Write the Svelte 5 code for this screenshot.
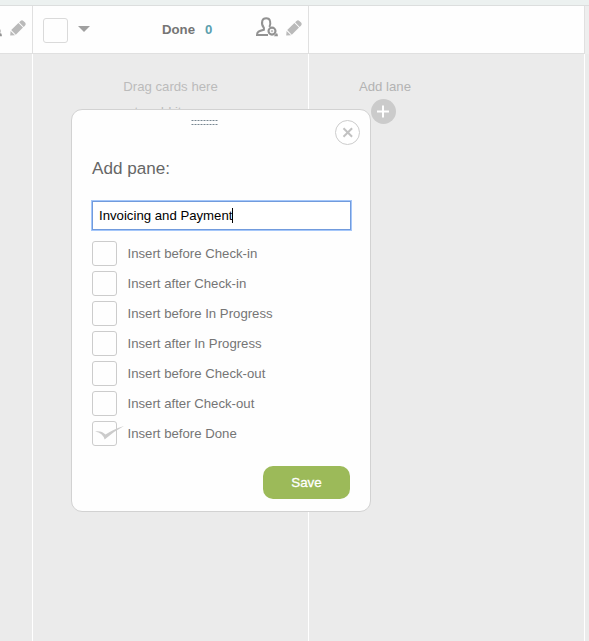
<script>
  const options = [
    'Insert before Check-in',
    'Insert after Check-in',
    'Insert before In Progress',
    'Insert after In Progress',
    'Insert before Check-out',
    'Insert after Check-out',
    'Insert before Done'
  ];
  let selected = $state(6);
  let name = $state('Invoicing and Payment');
</script>

{#snippet pencil()}
  <svg class="pencil" width="16" height="16" viewBox="0 0 16 16">
    <path d="M0.2 15.6 L.6 10.9 L5 15.3 Z M1.2 10 L8.4 2.9 L13 7.5 L5.8 14.7 Z M9.1 2.3 L10.5 .9 Q12 -.4 13.4 .9 L15.1 2.6 Q16.3 4 15.1 5.4 L13.7 6.9 Z" fill="#bababa" />
  </svg>
{/snippet}

{#snippet person()}
  <svg class="person" width="24" height="22" viewBox="0 0 24 22">
    <path d="M13 19.1H2C2 15.7 3.7 15 8.9 13.7V11.9C6.9 9.6 6.7 7 7.3 4.8C8.2 1.3 14.2 1.3 15 4.8C15.6 7 15.4 9.1 14.4 10.9" fill="none" stroke="#929292" stroke-width="2" />
    <circle cx="17" cy="15.1" r="3.5" fill="none" stroke="#929292" stroke-width="2.1" />
    <path d="M17 13.9v2.4M15.8 15.1h2.4" stroke="#aaa" stroke-width=".9" />
    <path d="M18.9 20.2Q19.8 18.4 22 17Q22.9 18.2 22.9 20.2Z" fill="#929292" />
  </svg>
{/snippet}

<div class="board">
  <div class="strip"></div>
  <header>
    <div class="head first">
      <span class="clip">{@render person()}</span>
      {@render pencil()}
    </div>
    <div class="head main">
      <span class="color"></span>
      <span class="arrow"></span>
      <span class="title">Done</span>
      <span class="count">0</span>
      <span class="icons">{@render person()}{@render pencil()}</span>
    </div>
    <div class="head last"></div>
    <div class="edge"></div>
  </header>
  <main>
    <div class="lane first"></div>
    <div class="lane hint">Drag cards here<br />to add items</div>
    <div class="lane add">
      <div class="addlane">
        <span>Add lane</span>
        <svg width="25" height="25" viewBox="0 0 25 25">
          <circle cx="12.5" cy="12.5" r="12.5" fill="#cbcbcb" />
          <path d="M12 6.5v12M6 12.5h12" stroke="#fff" stroke-width="2" />
        </svg>
      </div>
    </div>
  </main>

  <div class="dialog">
    <svg class="grip" width="27" height="5" viewBox="0 0 27 5">
      <path d="M0 .5h27M0 4.5h27" stroke="#bcc4ca" />
      <path d="M0 .5h27M0 4.5h27" stroke="#77858f" stroke-dasharray="1 2" stroke-dashoffset="-1" />
    </svg>
    <svg class="close" width="25" height="25" viewBox="0 0 25 25">
      <circle cx="12.5" cy="12.5" r="12" fill="#fff" stroke="#ccc" />
      <path d="M8.5 8.2l8.6 8.6M17.1 8.2l-8.6 8.6" stroke="#c2c2c2" stroke-width="2" />
    </svg>
    <h2>Add pane:</h2>
    <div class="field"><span>{name}</span><i></i></div>
    <div class="options">
      {#each options as option, i}
        <div class="option" role="radio" tabindex="-1" aria-checked={selected === i} onclick={() => (selected = i)} onkeydown={() => (selected = i)}>
          <span class="box">
            {#if selected === i}
              <svg width="29" height="14" viewBox="0 0 29 14">
                <path d="M0 5.4Q6.5 4.2 10.5 8.6Q18 3.4 29 0Q18.5 5.5 9.6 13.4Q8 7 0 5.4Z" fill="#cbcbcb" />
              </svg>
            {/if}
          </span>
          <span>{option}</span>
        </div>
      {/each}
    </div>
    <button>Save</button>
  </div>
</div>

<style>
  .board {
    position: relative;
    display: flex;
    flex-direction: column;
    width: 589px;
    height: 641px;
    overflow: hidden;
    background: #ebebeb;
    font: 13.2px/18px 'Liberation Sans', Arial, sans-serif;
    color: #757575;
  }
  .strip { height: 5px; background: #ecf1f0; border-bottom: 1px solid #dcdede; }
  header { display: flex; height: 48px; }
  .head {
    box-sizing: border-box;
    display: flex;
    background: #fefefe;
    border-right: 1px solid #e0e0e0;
    border-bottom: 1px solid #e0e0e0;
  }
  .first { width: 33px; }
  .main, .last { width: 276px; }
  .edge { flex: 1; background: #eee; }
  .head.first { padding-top: 10px; }
  .clip { display: flex; justify-content: flex-end; width: 3px; height: 22px; margin-right: 7px; overflow: hidden; }
  .head.first .pencil { margin-top: 4px; }
  .color {
    box-sizing: border-box;
    width: 25px;
    height: 25px;
    margin: 12px 0 0 10px;
    border: 1px solid #dadada;
    border-radius: 3px;
  }
  .arrow {
    height: 0;
    margin: 20px 0 0 10px;
    border: 6px solid transparent;
    border-top-color: #a0a0a0;
    border-bottom: 0;
  }
  .title { width: 43px; margin: 15px 0 0 72px; font-weight: bold; }
  .count { width: 8px; margin-top: 15px; font-weight: bold; color: #5b9fae; }
  .icons { display: flex; margin: 10px 0 0 42px; }
  .icons .pencil { margin: 4px 0 0 7px; }
  svg { display: block; flex-shrink: 0; }

  main { display: flex; flex: 1; }
  .lane { box-sizing: border-box; border-right: 1px solid #fff; }
  .hint { width: 276px; padding-top: 20px; line-height: 25px; color: #bbb; text-align: center; }
  .add { width: 276px; color: #b3b3b3; }
  .addlane {
    display: flex;
    flex-direction: column;
    align-items: center;
    width: 52px;
    margin: 24px 0 0 50px;
    white-space: nowrap;
  }
  .addlane svg { margin: 3px 3px 0 0; }

  .dialog {
    position: absolute;
    left: 71px;
    top: 109px;
    box-sizing: border-box;
    display: flex;
    flex-direction: column;
    width: 300px;
    height: 403px;
    padding: 49px 19px 0 20px;
    background: #fefefe;
    border: 1px solid #d2d2d2;
    border-radius: 11px;
  }
  .grip { position: absolute; left: 119px; top: 10px; }
  .close { position: absolute; right: 10px; top: 10px; }
  h2 { margin: 0; font-size: 17.1px; font-weight: normal; line-height: 20px; color: #666; }
  .field {
    box-sizing: border-box;
    display: flex;
    align-items: center;
    height: 29px;
    margin-top: 22px;
    padding-left: 6px;
    background: #fff;
    border: 1px solid #719bdd;
    box-shadow: 0 0 0 1px #a5c7fa;
    color: #000;
  }
  .field i { width: 1px; height: 15px; background: #000; }
  .options { display: flex; flex-direction: column; gap: 5px; margin-top: 11px; }
  .option { display: flex; align-items: center; gap: 10.5px; height: 25px; }
  .box {
    box-sizing: border-box;
    width: 25px;
    height: 25px;
    padding: 4px 0 0 2px;
    border: 1px solid #ccc;
    border-radius: 3px;
  }
  button {
    align-self: flex-end;
    width: 87px;
    height: 33px;
    margin: 20px 1px 0 0;
    padding: 0;
    background: #9cba59;
    border: 0;
    border-radius: 10px;
    color: #fff;
    font: 13.4px 'Liberation Sans', Arial, sans-serif;
    -webkit-text-stroke: 0.3px #fff;
  }
</style>
